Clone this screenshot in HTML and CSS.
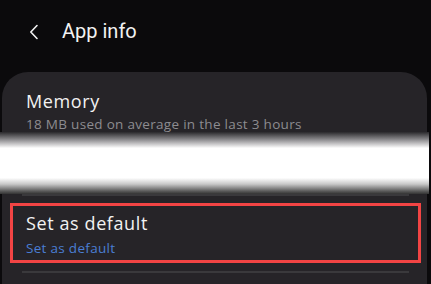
FILE: index.html
```html
<!DOCTYPE html>
<html lang="en">
<head>
  <meta charset="UTF-8" />
  <title>App info</title>
  <link rel="stylesheet" href="styles.css">
</head>
<body>
  <header class="topbar">
    <svg class="back" width="10" height="16" viewBox="0 0 10 16">
      <path d="M8 1.5 L1.8 8 L8 14.5" fill="none" stroke="#f2f2f2" stroke-width="1.6" stroke-linecap="round" stroke-linejoin="round"/>
    </svg>
    <h1>App info</h1>
  </header>
  <div class="card">
    <div class="item">
      <div class="item-title">Memory</div>
      <div class="item-sub">18 MB used on average in the last 3 hours</div>
    </div>
    <div class="redacted"></div>
    <div class="divider"></div>
    <div class="item highlight">
      <div class="item-title">Set as default</div>
      <div class="item-sub link">Set as default</div>
    </div>
    <div class="divider bottom"></div>
  </div>
</body>
</html>
```

FILE: styles.css
```css
body {
  margin: 0;
  font-family: Roboto, "Noto Sans", sans-serif;
  background: #0b0a0c;
  color: #f2f2f2;
  overflow: hidden;
}

.topbar {
  height: 72px;
  display: flex;
  align-items: flex-start;
  box-sizing: border-box;
  padding: 19px 0 0 29px;
}

.back {
  margin-top: 5px;
  margin-right: 23px;
}

.topbar h1 {
  margin: 0;
  font-size: 20px;
  font-weight: 400;
  line-height: 24px;
}

.card {
  margin: 0 4px 0 2px;
  background: #262428;
  border-radius: 26px 26px 0 0;
  height: 212px;
  padding-top: 18px;
  box-sizing: border-box;
}

.item {
  padding: 0 24px;
  font-family: "Open Sans", Roboto, sans-serif;
}

.item-title {
  font-size: 18px;
  line-height: 22px;
  letter-spacing: 0.6px;
}

.item-sub {
  font-size: 13.5px;
  line-height: 16px;
  letter-spacing: 0.3px;
  margin-top: 4px;
  color: #8d8c90;
}

.redacted {
  margin: 0 -2px;
  height: 62px;
  background: linear-gradient(#2a292c 0%, #8a898c 12%, #fff 26%, #fff 74%, #c8c8c8 84%, #555 96%, #333 100%);
}

.divider {
  height: 2px;
  background: #3a393c;
  margin: 0 18px 0 20px;
}

.highlight {
  margin: 7px 6px 0 8px;
  border: 3px solid #f24444;
  height: 60px;
  box-sizing: border-box;
  padding: 6px 13px 0;
}

.highlight .item-sub {
  margin-top: 6px;
}

.link {
  color: #4a7ed4;
}

.divider.bottom {
  margin-top: 8px;
}
```
